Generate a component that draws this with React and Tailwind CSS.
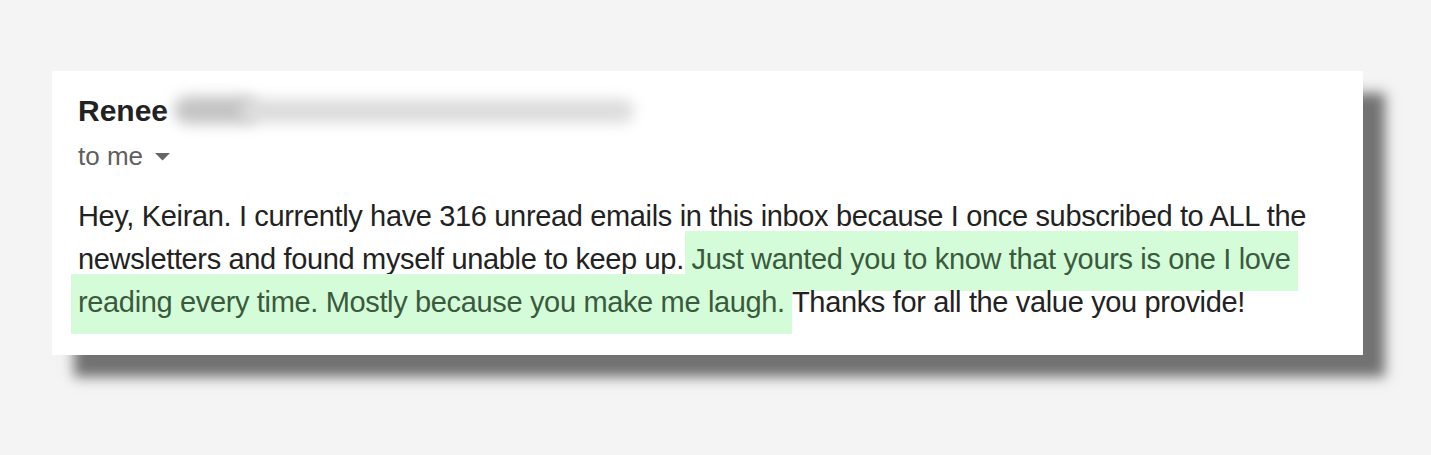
export default function App() {
  return (
    <div className="min-h-[455px] w-full bg-[#f4f4f4] pl-[52px] pt-[71px] font-['Liberation_Sans',Arial,sans-serif]">
      <div className="h-[284px] w-[1311px] bg-white pl-[26px] pt-[22px] shadow-[22px_22px_12px_rgba(100,100,100,0.9)]">
        <div className="flex items-center">
          <span className="text-[30px] font-bold leading-[36px] text-[#222]">Renee</span>
          <div className="relative ml-[8px] h-[36px] w-[464px]">
            <div className="absolute left-[-2px] top-[3px] h-[28px] w-[84px] rounded-full bg-[#c4c4c4] blur-[7px]" />
            <div className="absolute left-[64px] top-[6px] h-[24px] w-[394px] rounded-full bg-[#dcdcdc] blur-[7px]" />
          </div>
        </div>
        <div className="mt-[12px] flex items-center gap-[12px] text-[26px] leading-[30px] text-[#5f5f5f]">
          <span>to me</span>
          <svg width="15" height="8" viewBox="0 0 15 8" className="mt-[2px]">
            <path d="M0 0 L15 0 L7.5 7.5 Z" fill="#666" />
          </svg>
        </div>
        <p className="mt-[24px] w-[1250px] text-[29px] leading-[43px] tracking-[-0.35px] text-[#222]">
          Hey, Keiran. I currently have 316 unread emails in this inbox because I once subscribed to ALL the newsletters and found myself unable to keep up.{' '}
          <span className="box-decoration-clone bg-[#d5fcd8] pb-[16px] pt-[12px] text-[#3a5a3e] shadow-[-7px_0_0_#d5fcd8,7px_0_0_#d5fcd8]">
            Just wanted you to know that yours is one I love reading every time. Mostly because you make me laugh.
          </span>{' '}
          Thanks for all the value you provide!
        </p>
      </div>
    </div>
  );
}
